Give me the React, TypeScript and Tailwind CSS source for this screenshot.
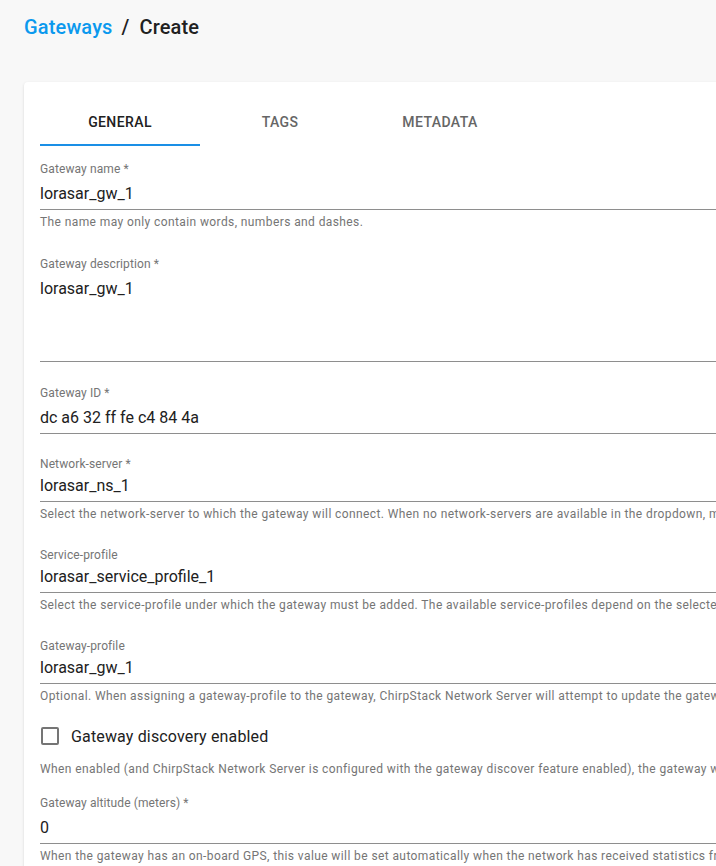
import React from "react";

const font = { fontFamily: "Roboto, 'Liberation Sans', sans-serif" };

function Label({ children }: { children: React.ReactNode }) {
  return <div className="h-[14px] text-[12px] leading-[14px] tracking-[0.1px] text-[#757575]">{children}</div>;
}

function Helper({ children }: { children: React.ReactNode }) {
  return (
    <div className="mt-[5px] h-[14px] whitespace-nowrap text-[12px] leading-[14px] tracking-[0.4px] text-[#757575]">
      {children}
    </div>
  );
}

function Field({
  label,
  value,
  pt,
  helper,
  rows = 1,
}: {
  label: string;
  value: string;
  pt: string;
  helper?: string;
  rows?: number;
}) {
  return (
    <div>
      <Label>{label}</Label>
      <div className={`${pt} pb-[6px] border-b border-[#8e8e8e]`}>
        <div
          className="text-[16px] leading-[19px] text-[#212121]"
          style={{ height: rows * 19 }}
        >
          {value}
        </div>
      </div>
      {helper && <Helper>{helper}</Helper>}
    </div>
  );
}

export default function App() {
  return (
    <div className="min-h-[866px] w-[716px] overflow-hidden bg-[#f8f8f8]" style={font}>
      <div className="px-6 pt-[13px]">
        <div className="flex h-[28px] items-center text-[20px] font-medium leading-[28px] tracking-[0.15px]">
          <span className="text-[#0b99ee]">Gateways</span>
          <span className="ml-[9px] mr-[10px] text-[#212121]">/</span>
          <span className="text-[#212121]">Create</span>
        </div>
      </div>
      <div className="ml-6 mt-[41px] w-[1200px] rounded-[4px] bg-white px-4 pt-4 pb-6 shadow-[0_1px_3px_rgba(0,0,0,0.12),0_1px_1px_rgba(0,0,0,0.06)]">
        <div className="flex h-[48px]">
          <div className="relative flex w-[160px] items-center justify-center text-[14px] font-medium tracking-[0.4px] text-[#212121]">
            GENERAL
            <div className="absolute bottom-0 left-0 h-[2px] w-full bg-[#1a8fe6]" />
          </div>
          <div className="flex w-[160px] items-center justify-center text-[14px] font-medium tracking-[0.4px] text-[#666666]">
            TAGS
          </div>
          <div className="flex w-[160px] items-center justify-center text-[14px] font-medium tracking-[0.4px] text-[#666666]">
            METADATA
          </div>
        </div>

        <div className="mt-4">
          <Field
            label="Gateway name *"
            value="lorasar_gw_1"
            pt="pt-[8px]"
            helper="The name may only contain words, numbers and dashes."
          />
        </div>
        <div className="mt-[28px]">
          <Field label="Gateway description *" value="lorasar_gw_1" pt="pt-[8px]" rows={4} />
        </div>
        <div className="mt-[24px]">
          <Field label="Gateway ID *" value="dc a6 32 ff fe c4 84 4a" pt="pt-[8px]" />
        </div>
        <div className="mt-[23px]">
          <Field
            label="Network-server *"
            value="lorasar_ns_1"
            pt="pt-[5px]"
            helper="Select the network-server to which the gateway will connect. When no network-servers are available in the dropdown, make sure a network-server exists for the organization."
          />
        </div>
        <div className="mt-[27px]">
          <Field
            label="Service-profile"
            value="lorasar_service_profile_1"
            pt="pt-[5px]"
            helper="Select the service-profile under which the gateway must be added. The available service-profiles depend on the selected network-server."
          />
        </div>
        <div className="mt-[27px]">
          <Field
            label="Gateway-profile"
            value="lorasar_gw_1"
            pt="pt-[5px]"
            helper="Optional. When assigning a gateway-profile to the gateway, ChirpStack Network Server will attempt to update the gateway according to the gateway-profile."
          />
        </div>
        <div className="mt-[9px] flex h-[48px] items-center">
          <div className="ml-[1px] h-[18px] w-[18px] rounded-[2px] border-2 border-[#757575]" />
          <span className="ml-[12px] text-[16px] leading-[19px] tracking-[0.15px] text-[#212121]">Gateway discovery enabled</span>
        </div>
        <div className="mt-[2px] h-[14px] whitespace-nowrap text-[12px] leading-[14px] tracking-[0.4px] text-[#757575]">
          When enabled (and ChirpStack Network Server is configured with the gateway discover feature enabled), the gateway will send out periodical pings to test its coverage by other gateways in the same network.
        </div>
        <div className="mt-[20px]">
          <Field
            label="Gateway altitude (meters) *"
            value="0"
            pt="pt-[8px]"
            helper="When the gateway has an on-board GPS, this value will be set automatically when the network has received statistics from the gateway."
          />
        </div>
      </div>
    </div>
  );
}
